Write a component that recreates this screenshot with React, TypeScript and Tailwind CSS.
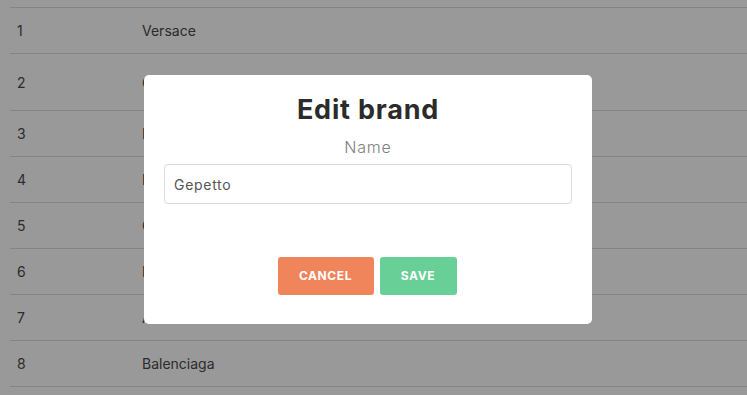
import React from "react";

const rows: [string, string, string][] = [
  ["1", "Versace", "h-[46px]"],
  ["2", "Gucci", "h-[57px]"],
  ["3", "Prada", "h-[46px]"],
  ["4", "Burberry", "h-[46px]"],
  ["5", "Chanel", "h-[46px]"],
  ["6", "Dior", "h-[46px]"],
  ["7", "Armani", "h-[46px]"],
  ["8", "Balenciaga", "h-[46px]"],
];

export default function App() {
  const font = { fontFamily: "Inter, 'Open Sans', sans-serif" };
  return (
    <div className="relative w-[747px] h-[395px] overflow-hidden bg-white" style={font}>
      <div className="pl-[10px] pt-[7px]">
        <div className="border-t border-[#dcdcdc]">
          {rows.map(([n, name, h]) => (
            <div key={n} className={`flex items-center border-b border-[#dcdcdc] text-[14px] text-[#4a4a4a] ${h}`}>
              <div className="w-[132px] pl-[7px]">{n}</div>
              <div>{name}</div>
            </div>
          ))}
        </div>
      </div>
      <div className="absolute inset-0 bg-black/40">
        <div className="ml-[144px] mt-[75px] w-[448px] h-[249px] rounded-[5px] bg-white px-[20px] pt-[19px] flex flex-col items-center">
          <div className="text-[27px] font-bold text-[#2b2b2b] leading-[32px] tracking-[0.8px]">Edit brand</div>
          <div className="mt-[11px] text-[16px] font-light text-[#808080] leading-[20px] tracking-[0.8px]">Name</div>
          <div className="mt-[7px] w-full h-[40px] rounded-[4px] border border-[#dcdcdc] flex items-center px-[9px] text-[14px] text-[#555] tracking-[0.7px]">
            Gepetto
          </div>
          <div className="mt-[53px] flex gap-[6px] -ml-[2px]">
            <button className="w-[96px] h-[38px] rounded-[3px] bg-[#f0845a] text-white text-[12px] font-bold tracking-[0.6px]">CANCEL</button>
            <button className="w-[77px] h-[38px] rounded-[3px] bg-[#68cf97] text-white text-[12px] font-bold tracking-[0.6px]">SAVE</button>
          </div>
        </div>
      </div>
    </div>
  );
}
